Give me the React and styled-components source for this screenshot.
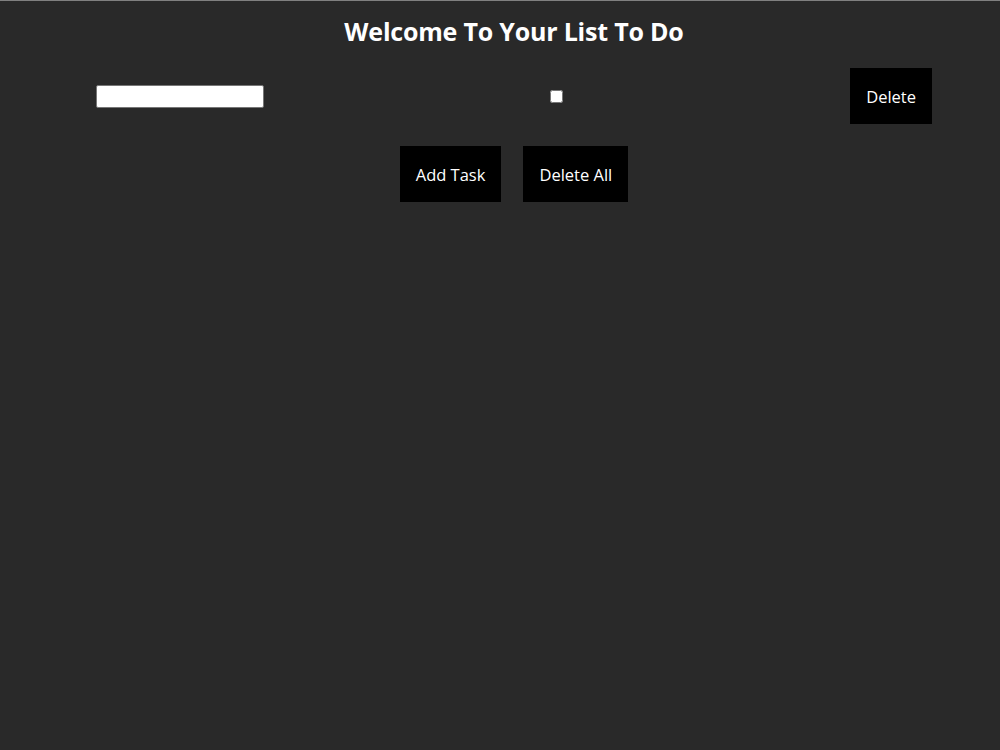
import React, { useState } from "react";
import styled, { createGlobalStyle } from "styled-components";

const GlobalStyle = createGlobalStyle`
  html, body {
    margin: 0;
    padding: 0;
    background-color: #292929;
    font-family: "Open Sans", "Noto Sans", sans-serif;
  }
  body {
    border-top: 1px solid #808080;
    min-height: 749px;
  }
`;

export default function App() {
  const [tasks, setTasks] = useState([{ text: "", done: false }]);

  const addTask = () => setTasks([...tasks, { text: "", done: false }]);
  const deleteAll = () => setTasks([]);
  const removeTask = (i) => setTasks(tasks.filter((_, idx) => idx !== i));

  return (
    <Page>
      <GlobalStyle />
      <Title>Welcome To Your List To Do</Title>
      {tasks.map((task, i) => (
        <TaskRow key={i}>
          <TaskInput type="text" defaultValue={task.text} />
          <Check type="checkbox" defaultChecked={task.done} />
          <Button onClick={() => removeTask(i)}>Delete</Button>
        </TaskRow>
      ))}
      <Actions>
        <Button onClick={addTask}>Add Task</Button>
        <Button onClick={deleteAll}>Delete All</Button>
      </Actions>
    </Page>
  );
}

// styling
const Page = styled.div`
  display: flex;
  flex-direction: column;
  padding-left: 28px;
`;

const Title = styled.h1`
  margin: 14px 0 0;
  text-align: center;
  color: #fff;
  font-size: 25px;
  font-weight: 700;
  line-height: 32px;
  letter-spacing: -0.2px;
`;

const TaskRow = styled.div`
  display: flex;
  align-items: center;
  justify-content: space-between;
  margin-top: 21px;
  padding: 0 68px 0 68px;
`;

const TaskInput = styled.input`
  width: 168px;
  height: 23px;
  box-sizing: border-box;
  border: 1px solid #767676;
  border-radius: 2px;
  background: #fff;
  margin: 0;
`;

const Check = styled.input`
  width: 13px;
  height: 13px;
  margin: 0 1px 0 0;
`;

const Button = styled.button`
  background-color: #000;
  color: #fff;
  border: none;
  font-family: "Open Sans", "Noto Sans", sans-serif;
  font-size: 16.5px;
  line-height: 20px;
  padding: 19px 16px 17px 16px;
  cursor: pointer;
`;

const Actions = styled.div`
  display: flex;
  justify-content: center;
  gap: 22px;
  margin-top: 22px;
`;
